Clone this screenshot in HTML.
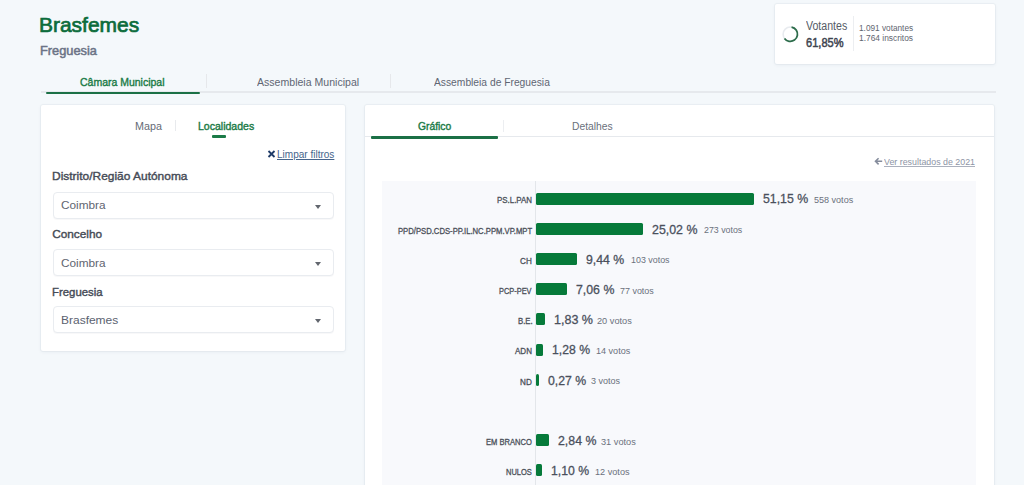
<!DOCTYPE html><html><head><meta charset="utf-8"><style>
*{margin:0;padding:0;box-sizing:border-box}
html,body{width:1024px;height:485px;overflow:hidden}
body{background:#f4f8fb;font-family:"Liberation Sans",sans-serif;position:relative}
.t{position:absolute;white-space:nowrap;font-family:"Liberation Sans",sans-serif}
.b{position:absolute}
.card{position:absolute;background:#fff;border-radius:2px;box-shadow:0 0 0 1px rgba(30,50,90,.035),0 1px 4px rgba(30,50,90,.06)}
.sel{position:absolute;left:52.5px;width:281.5px;height:27.2px;border:1px solid #e9ecf0;border-radius:4px;background:#fff;box-shadow:0 1px 1px rgba(20,30,60,.03)}
.car{position:absolute;left:315px;width:0;height:0;border-left:3.6px solid transparent;border-right:3.6px solid transparent;border-top:4.4px solid #62666e}
.bar{position:absolute;background:#067a3a;border-radius:1.5px}
</style></head><body>
<div class="card" style="left:775px;top:4px;width:220px;height:60px"></div>
<svg class="b" style="left:780px;top:24px" width="21" height="21" viewBox="0 0 21 21"><circle cx="10.3" cy="10.2" r="7.2" fill="none" stroke="#e8ebef" stroke-width="1.6"/><circle cx="10.3" cy="10.2" r="7.2" fill="none" stroke="#2d6d4b" stroke-width="1.8" stroke-dasharray="27.98 45.24" transform="rotate(-80 10.3 10.2)"/></svg>
<div class="b" style="left:853px;top:16px;width:1px;height:35px;background:#eceef1"></div>
<div class="b" style="left:41px;top:91px;width:955px;height:2px;background:#e6e9ed"></div>
<div class="b" style="left:46px;top:92px;width:154px;height:2px;background:#1b7046;border-radius:1px"></div>
<div class="b" style="left:206px;top:74px;width:1px;height:14px;background:#e6e8eb"></div>
<div class="b" style="left:390px;top:74px;width:1px;height:14px;background:#e6e8eb"></div>
<div class="card" style="left:41px;top:105px;width:304px;height:246px"></div>
<div class="b" style="left:175px;top:120px;width:1px;height:11px;background:#e8eaed"></div>
<div class="b" style="left:212px;top:135px;width:14px;height:2.5px;background:#1b7b47;border-radius:1px"></div>
<svg class="b" style="left:267px;top:150px" width="9" height="8" viewBox="0 0 9 8"><path d="M1.5 1 L7.5 7 M7.5 1 L1.5 7" stroke="#1f3b68" stroke-width="1.8"/></svg>
<div class="sel" style="top:191.6px"></div>
<div class="car" style="top:205.0px"></div>
<div class="sel" style="top:248.8px"></div>
<div class="car" style="top:262.2px"></div>
<div class="sel" style="top:306px"></div>
<div class="car" style="top:319.4px"></div>
<div class="card" style="left:365px;top:105px;width:629px;height:400px"></div>
<div class="b" style="left:365px;top:136px;width:629px;height:1px;background:#e6e9ed"></div>
<div class="b" style="left:371px;top:136px;width:127px;height:2.5px;background:#1b7046;border-radius:1px"></div>
<div class="b" style="left:503px;top:120px;width:1px;height:12px;background:#eceef1"></div>
<svg class="b" style="left:874px;top:157px" width="10" height="9" viewBox="0 0 10 9"><path d="M8.2 4.3 H2 M4.6 1.2 L1.5 4.3 L4.6 7.4" fill="none" stroke="#858c9c" stroke-width="1.6"/></svg>
<div class="b" style="left:382px;top:181px;width:594px;height:310px;background:#f8f9fc"></div>
<div class="b" style="left:535px;top:181px;width:1px;height:310px;background:#e3e6ea"></div>
<div class="bar" style="left:535.50px;top:192.60px;width:218.57px;height:12.00px"></div>
<div class="bar" style="left:535.50px;top:222.80px;width:107.88px;height:12.00px"></div>
<div class="bar" style="left:535.50px;top:253.00px;width:41.89px;height:12.00px"></div>
<div class="bar" style="left:535.50px;top:283.20px;width:31.81px;height:12.00px"></div>
<div class="bar" style="left:535.50px;top:313.40px;width:9.65px;height:12.00px"></div>
<div class="bar" style="left:535.50px;top:343.60px;width:7.32px;height:12.00px"></div>
<div class="bar" style="left:535.50px;top:373.80px;width:3.04px;height:12.00px"></div>
<div class="bar" style="left:535.50px;top:434.20px;width:13.93px;height:12.00px"></div>
<div class="bar" style="left:535.50px;top:464.40px;width:6.56px;height:12.00px"></div>
<div class="t" id="h1" style="left:39.29px;top:14.02px;font-size:21px;line-height:21px;font-weight:400;-webkit-text-stroke:0.7px #0b6c3b;color:#0b6c3b;letter-spacing:0.000px;transform:scaleX(0.9981);transform-origin:0 0;">Brasfemes</div>
<div class="t" id="h2" style="left:40.00px;top:45.31px;font-size:12.6px;line-height:12.6px;font-weight:400;-webkit-text-stroke:0.5px #6b7386;color:#6b7386;letter-spacing:0.000px;transform:scaleX(1.0178);transform-origin:0 0;">Freguesia</div>
<div class="t" id="tb1" style="left:80.19px;top:76.44px;font-size:11.6px;line-height:11.6px;font-weight:400;-webkit-text-stroke:0.4px #1b7b47;color:#1b7b47;letter-spacing:0.000px;transform:scaleX(0.9041);transform-origin:0 0;">Câmara Municipal</div>
<div class="t" id="tb2" style="left:256.57px;top:76.30px;font-size:11.6px;line-height:11.6px;font-weight:400;color:#5f6673;letter-spacing:0.000px;transform:scaleX(0.9106);transform-origin:0 0;">Assembleia Municipal</div>
<div class="t" id="tb3" style="left:433.90px;top:76.24px;font-size:11.6px;line-height:11.6px;font-weight:400;color:#5f6673;letter-spacing:0.000px;transform:scaleX(0.8856);transform-origin:0 0;">Assembleia de Freguesia</div>
<div class="t" id="v1" style="left:805.94px;top:20.00px;font-size:12.3px;line-height:12.3px;font-weight:400;color:#555b66;letter-spacing:0.000px;transform:scaleX(0.8605);transform-origin:0 0;">Votantes</div>
<div class="t" id="v2" style="left:805.56px;top:37.32px;font-size:12.7px;line-height:12.7px;font-weight:400;-webkit-text-stroke:0.5px #3e4450;color:#3e4450;letter-spacing:0.000px;transform:scaleX(0.8735);transform-origin:0 0;">61,85%</div>
<div class="t" id="v3" style="left:859.26px;top:23.47px;font-size:9.6px;line-height:9.6px;font-weight:400;color:#5f6570;letter-spacing:0.000px;transform:scaleX(0.8595);transform-origin:0 0;">1.091 votantes</div>
<div class="t" id="v4" style="left:859.27px;top:33.47px;font-size:9.6px;line-height:9.6px;font-weight:400;color:#5f6570;letter-spacing:0.000px;transform:scaleX(0.8739);transform-origin:0 0;">1.764 inscritos</div>
<div class="t" id="m1" style="left:134.54px;top:121.31px;font-size:10.9px;line-height:10.9px;font-weight:400;color:#656b76;letter-spacing:0.000px;transform:scaleX(0.9870);transform-origin:0 0;">Mapa</div>
<div class="t" id="m2" style="left:198.33px;top:121.26px;font-size:10.9px;line-height:10.9px;font-weight:400;-webkit-text-stroke:0.4px #1b7b47;color:#1b7b47;letter-spacing:0.000px;transform:scaleX(0.9661);transform-origin:0 0;">Localidades</div>
<div class="t" id="lf" style="left:277.22px;top:150.25px;font-size:10.2px;line-height:10.2px;font-weight:400;color:#46658c;letter-spacing:0.000px;transform:scaleX(0.9839);transform-origin:0 0;text-decoration:underline;">Limpar filtros</div>
<div class="t" id="l1" style="left:52.26px;top:171.11px;font-size:11.8px;line-height:11.8px;font-weight:400;-webkit-text-stroke:0.4px #454b56;color:#454b56;letter-spacing:0.000px;transform:scaleX(1.0130);transform-origin:0 0;">Distrito/Região Autónoma</div>
<div class="t" id="s1" style="left:61.48px;top:200.14px;font-size:11.5px;line-height:11.5px;font-weight:400;color:#5f6570;letter-spacing:0.000px;transform:scaleX(1.0267);transform-origin:0 0;">Coimbra</div>
<div class="t" id="l2" style="left:52.18px;top:228.91px;font-size:11.8px;line-height:11.8px;font-weight:400;-webkit-text-stroke:0.4px #454b56;color:#454b56;letter-spacing:0.000px;">Concelho</div>
<div class="t" id="s2" style="left:61.41px;top:257.89px;font-size:11.5px;line-height:11.5px;font-weight:400;color:#5f6570;letter-spacing:0.000px;transform:scaleX(1.0261);transform-origin:0 0;">Coimbra</div>
<div class="t" id="l3" style="left:51.88px;top:286.84px;font-size:11.8px;line-height:11.8px;font-weight:400;-webkit-text-stroke:0.4px #454b56;color:#454b56;letter-spacing:0.000px;transform:scaleX(0.9651);transform-origin:0 0;">Freguesia</div>
<div class="t" id="s3" style="left:61.05px;top:315.41px;font-size:11.5px;line-height:11.5px;font-weight:400;color:#5b6270;letter-spacing:0.000px;transform:scaleX(1.0416);transform-origin:0 0;">Brasfemes</div>
<div class="t" id="g1" style="left:417.61px;top:121.20px;font-size:10.6px;line-height:10.6px;font-weight:400;-webkit-text-stroke:0.4px #1b7b47;color:#1b7b47;letter-spacing:0.000px;transform:scaleX(0.9725);transform-origin:0 0;">Gráfico</div>
<div class="t" id="g2" style="left:571.66px;top:121.37px;font-size:10.6px;line-height:10.6px;font-weight:400;color:#6a707b;letter-spacing:0.000px;transform:scaleX(0.9727);transform-origin:0 0;">Detalhes</div>
<div class="t" id="vr" style="left:884.48px;top:156.93px;font-size:9.8px;line-height:9.8px;font-weight:400;color:#8d94a5;letter-spacing:0.000px;transform:scaleX(0.9032);transform-origin:0 0;text-decoration:underline;text-decoration-color:#aab0bd;text-underline-offset:0.6px;">Ver resultados de 2021</div>
<div class="t" id="rl0" style="left:497.06px;top:196.33px;font-size:8.6px;line-height:8.6px;font-weight:400;-webkit-text-stroke:0.3px #4b5059;color:#4b5059;letter-spacing:0.000px;transform:scaleX(0.9211);transform-origin:0 0;">PS.L.PAN</div>
<div class="t" id="rp0" style="left:763.08px;top:192.43px;font-size:13.3px;line-height:13.3px;font-weight:400;-webkit-text-stroke:0.3px #4a505c;color:#4a505c;letter-spacing:0.000px;transform:scaleX(0.9254);transform-origin:0 0;">51,15 %</div>
<div class="t" id="rv0" style="left:813.98px;top:195.37px;font-size:9.5px;line-height:9.5px;font-weight:400;color:#6b717c;letter-spacing:0.000px;transform:scaleX(0.9508);transform-origin:0 0;">558 votos</div>
<div class="t" id="rl1" style="left:398.03px;top:226.56px;font-size:8.6px;line-height:8.6px;font-weight:400;-webkit-text-stroke:0.3px #4b5059;color:#4b5059;letter-spacing:0.000px;transform:scaleX(0.8939);transform-origin:0 0;">PPD/PSD.CDS-PP.IL.NC.PPM.VP.MPT</div>
<div class="t" id="rp1" style="left:652.22px;top:222.82px;font-size:13.3px;line-height:13.3px;font-weight:400;-webkit-text-stroke:0.3px #4a505c;color:#4a505c;letter-spacing:0.000px;transform:scaleX(0.9320);transform-origin:0 0;">25,02 %</div>
<div class="t" id="rv1" style="left:704.01px;top:224.97px;font-size:9.5px;line-height:9.5px;font-weight:400;color:#6b717c;letter-spacing:0.000px;transform:scaleX(0.9290);transform-origin:0 0;">273 votos</div>
<div class="t" id="rl2" style="left:520.21px;top:256.98px;font-size:8.6px;line-height:8.6px;font-weight:400;-webkit-text-stroke:0.3px #4b5059;color:#4b5059;letter-spacing:0.000px;transform:scaleX(0.9489);transform-origin:0 0;">CH</div>
<div class="t" id="rp2" style="left:586.40px;top:252.55px;font-size:13.3px;line-height:13.3px;font-weight:400;-webkit-text-stroke:0.3px #4a505c;color:#4a505c;letter-spacing:0.000px;transform:scaleX(0.9230);transform-origin:0 0;">9,44 %</div>
<div class="t" id="rv2" style="left:630.55px;top:255.30px;font-size:9.5px;line-height:9.5px;font-weight:400;color:#6b717c;letter-spacing:0.000px;transform:scaleX(0.9356);transform-origin:0 0;">103 votos</div>
<div class="t" id="rl3" style="left:499.18px;top:286.54px;font-size:8.6px;line-height:8.6px;font-weight:400;-webkit-text-stroke:0.3px #4b5059;color:#4b5059;letter-spacing:0.000px;transform:scaleX(0.8626);transform-origin:0 0;">PCP-PEV</div>
<div class="t" id="rp3" style="left:576.11px;top:283.41px;font-size:13.3px;line-height:13.3px;font-weight:400;-webkit-text-stroke:0.3px #4a505c;color:#4a505c;letter-spacing:0.000px;transform:scaleX(0.9262);transform-origin:0 0;">7,06 %</div>
<div class="t" id="rv3" style="left:620.27px;top:285.50px;font-size:9.5px;line-height:9.5px;font-weight:400;color:#6b717c;letter-spacing:0.000px;transform:scaleX(0.9405);transform-origin:0 0;">77 votos</div>
<div class="t" id="rl4" style="left:517.82px;top:317.29px;font-size:8.6px;line-height:8.6px;font-weight:400;-webkit-text-stroke:0.3px #4b5059;color:#4b5059;letter-spacing:0.000px;transform:scaleX(0.9029);transform-origin:0 0;">B.E.</div>
<div class="t" id="rp4" style="left:554.00px;top:312.94px;font-size:13.3px;line-height:13.3px;font-weight:400;-webkit-text-stroke:0.3px #4a505c;color:#4a505c;letter-spacing:0.000px;transform:scaleX(0.9423);transform-origin:0 0;">1,83 %</div>
<div class="t" id="rv4" style="left:597.40px;top:315.74px;font-size:9.5px;line-height:9.5px;font-weight:400;color:#6b717c;letter-spacing:0.000px;transform:scaleX(0.9695);transform-origin:0 0;">20 votos</div>
<div class="t" id="rl5" style="left:515.14px;top:347.03px;font-size:8.6px;line-height:8.6px;font-weight:400;-webkit-text-stroke:0.3px #4b5059;color:#4b5059;letter-spacing:0.000px;transform:scaleX(0.9322);transform-origin:0 0;">ADN</div>
<div class="t" id="rp5" style="left:552.02px;top:343.05px;font-size:13.3px;line-height:13.3px;font-weight:400;-webkit-text-stroke:0.3px #4a505c;color:#4a505c;letter-spacing:0.000px;transform:scaleX(0.9179);transform-origin:0 0;">1,28 %</div>
<div class="t" id="rv5" style="left:595.68px;top:345.78px;font-size:9.5px;line-height:9.5px;font-weight:400;color:#6b717c;letter-spacing:0.000px;transform:scaleX(0.9532);transform-origin:0 0;">14 votos</div>
<div class="t" id="rl6" style="left:520.14px;top:378.01px;font-size:8.6px;line-height:8.6px;font-weight:400;-webkit-text-stroke:0.3px #4b5059;color:#4b5059;letter-spacing:0.000px;transform:scaleX(0.9503);transform-origin:0 0;">ND</div>
<div class="t" id="rp6" style="left:547.86px;top:373.95px;font-size:13.3px;line-height:13.3px;font-weight:400;-webkit-text-stroke:0.3px #4a505c;color:#4a505c;letter-spacing:0.000px;transform:scaleX(0.9231);transform-origin:0 0;">0,27 %</div>
<div class="t" id="rv6" style="left:591.19px;top:376.46px;font-size:9.5px;line-height:9.5px;font-weight:400;color:#6b717c;letter-spacing:0.000px;transform:scaleX(0.9498);transform-origin:0 0;">3 votos</div>
<div class="t" id="rl8" style="left:486.46px;top:438.21px;font-size:8.6px;line-height:8.6px;font-weight:400;-webkit-text-stroke:0.3px #4b5059;color:#4b5059;letter-spacing:0.000px;transform:scaleX(0.8816);transform-origin:0 0;">EM BRANCO</div>
<div class="t" id="rp8" style="left:558.18px;top:434.42px;font-size:13.3px;line-height:13.3px;font-weight:400;-webkit-text-stroke:0.3px #4a505c;color:#4a505c;letter-spacing:0.000px;transform:scaleX(0.9274);transform-origin:0 0;">2,84 %</div>
<div class="t" id="rv8" style="left:601.14px;top:436.72px;font-size:9.5px;line-height:9.5px;font-weight:400;color:#6b717c;letter-spacing:0.000px;transform:scaleX(0.9698);transform-origin:0 0;">31 votos</div>
<div class="t" id="rl9" style="left:505.96px;top:467.84px;font-size:8.6px;line-height:8.6px;font-weight:400;-webkit-text-stroke:0.3px #4b5059;color:#4b5059;letter-spacing:0.000px;transform:scaleX(0.8739);transform-origin:0 0;">NULOS</div>
<div class="t" id="rp9" style="left:551.10px;top:464.04px;font-size:13.3px;line-height:13.3px;font-weight:400;-webkit-text-stroke:0.3px #4a505c;color:#4a505c;letter-spacing:0.000px;transform:scaleX(0.9197);transform-origin:0 0;">1,10 %</div>
<div class="t" id="rv9" style="left:594.59px;top:467.05px;font-size:9.5px;line-height:9.5px;font-weight:400;color:#6b717c;letter-spacing:0.000px;transform:scaleX(0.9623);transform-origin:0 0;">12 votos</div>
</body></html>
